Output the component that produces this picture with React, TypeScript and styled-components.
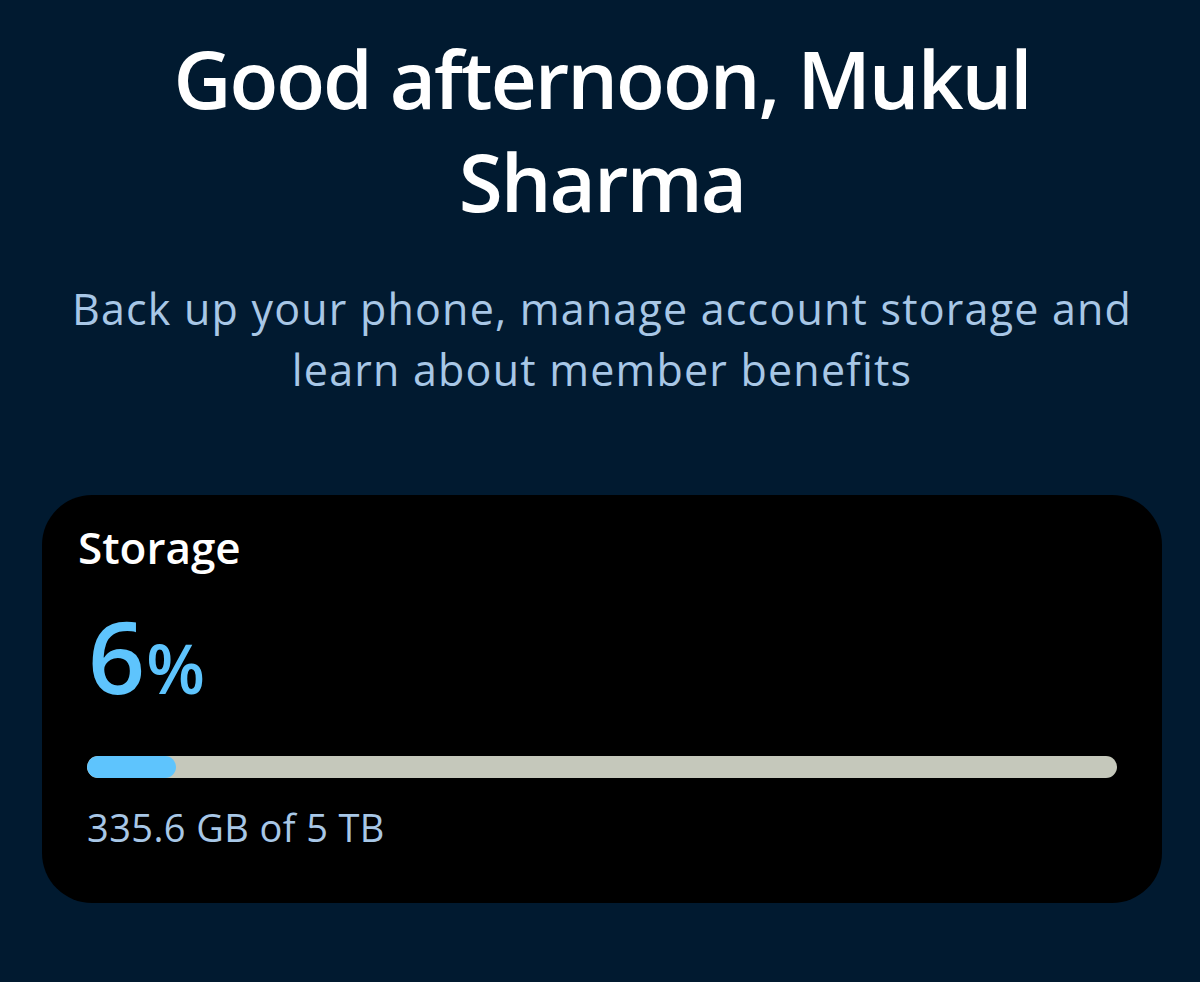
import React from 'react';
import styled, { createGlobalStyle } from 'styled-components';

const GlobalStyle = createGlobalStyle`
  html, body {
    margin: 0;
    padding: 0;
    background: #011a30;
  }
  body {
    font-family: "Open Sans", Roboto, sans-serif;
  }
`;

const Page = styled.main`
  min-height: 982px;
  box-sizing: border-box;
  padding: 26px 38px 0 42px;
  display: flex;
  flex-direction: column;
  align-items: center;
`;

const Greeting = styled.h1`
  margin: 0;
  width: 940px;
  font-family: "Open Sans", Lato, sans-serif;
  font-weight: 600;
  font-size: 80px;
  line-height: 103px;
  color: #ffffff;
  text-align: center;
  letter-spacing: -2px;
`;

const Intro = styled.p`
  margin: 46px 0 0;
  font-family: "Open Sans", Roboto, sans-serif;
  font-size: 43px;
  line-height: 61px;
  color: #a8c7e6;
  text-align: center;
  letter-spacing: 1.2px;
`;

const Card = styled.section`
  align-self: stretch;
  margin: 95px 0 0;
  height: 408px;
  box-sizing: border-box;
  background: #000000;
  border-radius: 50px;
  padding: 24px 45px 0;
  display: flex;
  flex-direction: column;
`;

const CardTitle = styled.h2`
  margin: 0 0 0 -9px;
  font-family: "Open Sans", Roboto, sans-serif;
  font-weight: 600;
  font-size: 44px;
  line-height: 56px;
  color: #ffffff;
`;

const Percent = styled.div`
  margin: 30px 0 0 1px;
  font-family: "Open Sans", Lato, sans-serif;
  font-weight: 600;
  font-size: 100px;
  line-height: 100px;
  color: #5ec4fd;
  letter-spacing: -1px;
`;

const Sign = styled.span`
  font-size: 68px;
  line-height: 1;
  margin-left: 2px;
`;

const Track = styled.div`
  margin-top: 51px;
  height: 22px;
  border-radius: 11px;
  background: #c5c8bb;
  overflow: hidden;
`;

const Fill = styled.div`
  height: 100%;
  border-radius: 11px;
  background: #5ec4fd;
`;

const Usage = styled.div`
  margin-top: 27px;
  font-family: "Open Sans", Roboto, sans-serif;
  font-size: 38px;
  line-height: 44px;
  color: #a8c7e6;
  letter-spacing: 0.4px;
`;

const used = 335.6;
const total = 5000;

export default function App() {
  const share = Math.max((used / total) * 100, 8.6);
  return (
    <>
      <GlobalStyle />
      <Page>
        <Greeting>Good afternoon, Mukul Sharma</Greeting>
        <Intro>
          Back up your phone, manage account storage and
          <br />
          learn about member benefits
        </Intro>
        <Card>
          <CardTitle>Storage</CardTitle>
          <Percent>
            6<Sign>%</Sign>
          </Percent>
          <Track>
            <Fill style={{ width: `${share}%` }} />
          </Track>
          <Usage>335.6 GB of 5 TB</Usage>
        </Card>
      </Page>
    </>
  );
}
